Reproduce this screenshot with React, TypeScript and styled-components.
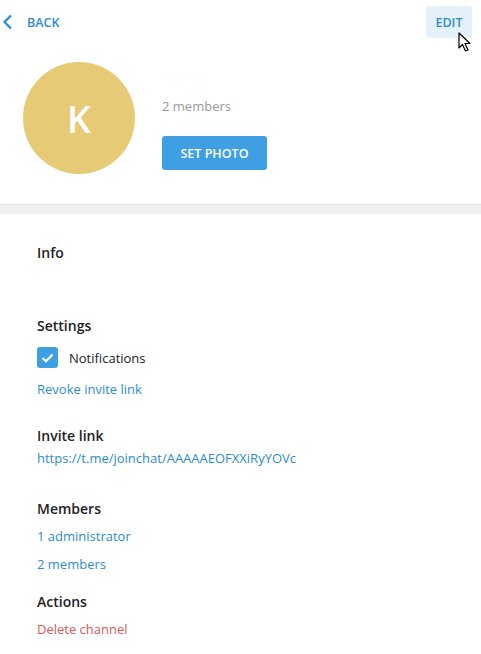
import React from "react";
import styled, { createGlobalStyle } from "styled-components";

const Global = createGlobalStyle`
  html, body { margin: 0; padding: 0; background: #fff; }
  body { font-family: "Open Sans", "Noto Sans", sans-serif; }
  * { box-sizing: border-box; }
`;

const Page = styled.div`
  width: 481px;
  height: 654px;
  overflow: hidden;
  position: relative;
  background: #fff;
`;

const TopBar = styled.div`
  display: flex;
  align-items: center;
  justify-content: space-between;
  height: 44px;
  padding: 6px 9px 0 0;
`;

const BackButton = styled.div`
  display: flex;
  align-items: center;
  gap: 13px;
  color: #2d8ccf;
  font-size: 12.5px;
  font-weight: 600;
  padding-left: 2px;
  margin-top: -6px;
`;

const EditButton = styled.div`
  display: flex;
  align-items: center;
  justify-content: center;
  width: 46px;
  height: 32px;
  border-radius: 3px;
  background: #e4f1fb;
  color: #2d8ccf;
  font-size: 12.5px;
  font-weight: 600;
  margin-top: -6px;
`;

const Header = styled.div`
  display: flex;
  gap: 27px;
  padding: 18px 0 0 23px;
  height: 160px;
`;

const Avatar = styled.div`
  width: 112px;
  height: 112px;
  border-radius: 50%;
  background: #e6ca76;
  color: #fff;
  font-size: 38px;
  font-weight: 600;
  display: flex;
  align-items: center;
  justify-content: center;
`;

const HeaderInfo = styled.div`
  display: flex;
  flex-direction: column;
  align-items: flex-start;
`;

const Title = styled.div`
  color: #fefefe;
  font-size: 16px;
  height: 28px;
  margin-top: 4px;
`;

const Subtitle = styled.div`
  color: #9a9a9a;
  font-size: 13px;
  margin-top: 3px;
`;

const PrimaryButton = styled.div`
  margin-top: 21px;
  width: 105px;
  height: 34px;
  border-radius: 3px;
  background: #3ea0e2;
  color: #fff;
  font-size: 12.5px;
  font-weight: 600;
  display: flex;
  align-items: center;
  justify-content: center;
`;

const Divider = styled.div`
  height: 10px;
  background: #f0f0f0;
  border-top: 1px solid #e2e2e2;
`;

const Content = styled.div`
  padding: 29px 37px 0;
  display: flex;
  flex-direction: column;
`;

const Section = styled.div<{ $gap: number }>`
  display: flex;
  flex-direction: column;
  margin-bottom: ${(p) => p.$gap}px;
`;

const SectionTitle = styled.div`
  color: #222;
  font-size: 14px;
  font-weight: 600;
  line-height: 20px;
`;

const Link = styled.div<{ $danger?: boolean; $top: number }>`
  color: ${(p) => (p.$danger ? "#d9595b" : "#2d8ccf")};
  font-size: 13px;
  line-height: 18px;
  margin-top: ${(p) => p.$top}px;
`;

const CheckRow = styled.div`
  display: flex;
  align-items: center;
  gap: 11px;
  margin-top: 11px;
  font-size: 13px;
  color: #222;
`;

const Checkbox = styled.div`
  width: 21px;
  height: 21px;
  border-radius: 3px;
  background: #3ea0e2;
  display: flex;
  align-items: center;
  justify-content: center;
`;

const Cursor = styled.svg`
  position: absolute;
  left: 458px;
  top: 32px;
`;

export default function App() {
  return (
    <Page>
      <Global />
      <TopBar>
        <BackButton>
          <svg width="12" height="16" viewBox="0 0 12 16">
            <path d="M9 1.5 L2.5 8 L9 14.5" fill="none" stroke="#2d8ccf" strokeWidth="2.2" />
          </svg>
          BACK
        </BackButton>
        <EditButton>EDIT</EditButton>
      </TopBar>
      <Header>
        <Avatar>K</Avatar>
        <HeaderInfo>
          <Title>Канал</Title>
          <Subtitle>2 members</Subtitle>
          <PrimaryButton>SET PHOTO</PrimaryButton>
        </HeaderInfo>
      </Header>
      <Divider />
      <Content>
        <Section $gap={53}>
          <SectionTitle>Info</SectionTitle>
        </Section>
        <Section $gap={28}>
          <SectionTitle>Settings</SectionTitle>
          <CheckRow>
            <Checkbox>
              <svg width="13" height="10" viewBox="0 0 13 10">
                <path d="M1.5 5 L5 8.3 L11.5 1.5" fill="none" stroke="#fff" strokeWidth="2.2" />
              </svg>
            </Checkbox>
            Notifications
          </CheckRow>
          <Link $top={12}>Revoke invite link</Link>
        </Section>
        <Section $gap={32}>
          <SectionTitle>Invite link</SectionTitle>
          <Link $top={3}>https://t.me/joinchat/AAAAAEOFXXiRyYOVc</Link>
        </Section>
        <Section $gap={19}>
          <SectionTitle>Members</SectionTitle>
          <Link $top={8}>1 administrator</Link>
          <Link $top={10}>2 members</Link>
        </Section>
        <Section $gap={0}>
          <SectionTitle>Actions</SectionTitle>
          <Link $top={8} $danger>Delete channel</Link>
        </Section>
      </Content>
      <Cursor width="14" height="21" viewBox="0 0 14 21">
        <path d="M1 1 L1 16 L4.5 12.5 L7.5 19 L10 18 L7 11.5 L12 11.5 Z" fill="#fff" stroke="#000" strokeWidth="1.2" strokeLinejoin="round" />
      </Cursor>
    </Page>
  );
}
